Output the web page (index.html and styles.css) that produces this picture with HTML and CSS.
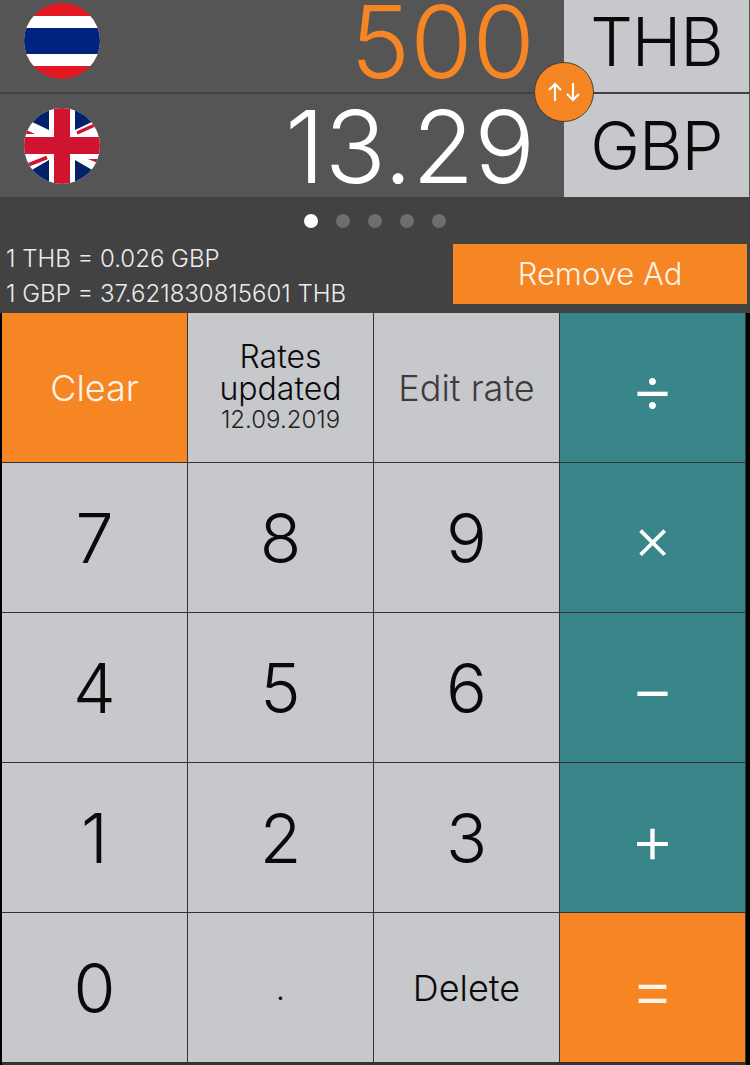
FILE: index.html
```html
<!DOCTYPE html>
<html lang="en">
<head>
  <meta charset="UTF-8">
  <title>Currency Calculator</title>
  <link rel="stylesheet" href="styles.css">
</head>
<body>
  <div class="app">
    <div class="converter">
      <div class="row row-from">
        <svg class="flag" viewBox="0 0 76 76">
          <defs><clipPath id="clipTh"><circle cx="38" cy="38" r="38"/></clipPath></defs>
          <g clip-path="url(#clipTh)">
            <rect width="76" height="76" fill="#e3171f"/>
            <rect y="13" width="76" height="50" fill="#fff"/>
            <rect y="25" width="76" height="26" fill="#00247d"/>
          </g>
        </svg>
        <div class="amount amount-from">500</div>
        <div class="code">THB</div>
      </div>
      <div class="row row-to">
        <svg class="flag" viewBox="0 0 76 76">
          <defs><clipPath id="clipGb"><circle cx="38" cy="38" r="38"/></clipPath></defs>
          <g clip-path="url(#clipGb)">
            <rect width="76" height="76" fill="#fff"/>
            <path d="M25 -2V22L6 13L0 0Z" fill="#012169"/>
            <path d="M51 -2V22L70 13L76 0Z" fill="#012169"/>
            <path d="M25 78V52L6 63L0 76Z" fill="#012169"/>
            <path d="M51 78V52L70 63L76 76Z" fill="#012169"/>
            <path d="M53 25L72 16.5M4 57L23 49.5" stroke="#d0142f" stroke-width="3.5"/>
            <path d="M0 21L11 26H0ZM64 51H76V56Z" fill="#d0142f"/>
            <rect x="30" width="16" height="76" fill="#d0142f"/>
            <rect y="29" width="76" height="17" fill="#d0142f"/>
          </g>
        </svg>
        <div class="amount">13.29</div>
        <div class="code">GBP</div>
      </div>
      <div class="swap">
        <svg viewBox="0 0 36 22" width="36" height="22" fill="none" stroke="#fff" stroke-width="2.2">
          <path d="M9 20V3M3 9l6-6 6 6"/>
          <path d="M27 2v17M21 13l6 6 6-6"/>
        </svg>
      </div>
    </div>

    <div class="info">
      <div class="dots">
        <span class="dot active"></span>
        <span class="dot"></span>
        <span class="dot"></span>
        <span class="dot"></span>
        <span class="dot"></span>
      </div>
      <div class="info-row">
        <div class="rates">
          <div>1 THB = 0.026 GBP</div>
          <div>1 GBP = 37.621830815601 THB</div>
        </div>
        <div class="remove-ad">Remove Ad</div>
      </div>
    </div>

    <div class="keypad">
      <div class="key orange small">Clear</div>
      <div class="key updated">
        <span>Rates</span>
        <span>updated</span>
        <span class="date">12.09.2019</span>
      </div>
      <div class="key small muted">Edit rate</div>
      <div class="key op">÷</div>
      <div class="key">7</div>
      <div class="key">8</div>
      <div class="key">9</div>
      <div class="key op times">×</div>
      <div class="key">4</div>
      <div class="key">5</div>
      <div class="key">6</div>
      <div class="key op">−</div>
      <div class="key">1</div>
      <div class="key">2</div>
      <div class="key">3</div>
      <div class="key op">+</div>
      <div class="key">0</div>
      <div class="key point">.</div>
      <div class="key small">Delete</div>
      <div class="key op orange">=</div>
    </div>
  </div>
</body>
</html>
```

FILE: styles.css
```css
html, body {
  margin: 0;
  height: 100%;
}

body {
  background-color: #424242;
  font-family: 'Inter', 'Liberation Sans', sans-serif;
  font-weight: 300;
  overflow: hidden;
}

.app {
  width: 750px;
  height: 1065px;
  display: flex;
  flex-direction: column;
}

.converter {
  position: relative;
  display: flex;
  flex-direction: column;
  gap: 2px;
  height: 197px;
  background-color: #424242;
}

.row {
  display: flex;
  align-items: center;
  background-color: #555555;
  padding-left: 24px;
}

.row-from {
  height: 92px;
}

.row-to {
  height: 103px;
}

.row-from .flag,
.row-from .amount {
  margin-bottom: 10px;
}

.row-from .code {
  padding-bottom: 10px;
  box-sizing: border-box;
}

.flag {
  width: 76px;
  height: 76px;
  flex-shrink: 0;
}

.amount {
  flex: 1;
  text-align: right;
  padding-right: 29px;
  font-size: 101px;
  line-height: 82px;
  font-weight: 280;
  color: #ffffff;
  white-space: nowrap;
}

.amount-from {
  color: #f68523;
}

.code {
  width: 185px;
  height: 100%;
  flex-shrink: 0;
  margin-right: 1px;
  display: flex;
  align-items: center;
  justify-content: center;
  background-color: #c7c8cc;
  color: #0a0a0a;
  font-size: 67px;
  letter-spacing: -1px;
}

.swap {
  position: absolute;
  left: 534px;
  top: 62px;
  width: 58px;
  height: 58px;
  border: 1.5px solid #4a4034;
  border-radius: 50%;
  background-color: #f68523;
  display: flex;
  align-items: center;
  justify-content: center;
}

.info {
  height: 116px;
  display: flex;
  flex-direction: column;
  color: #ececec;
}

.dots {
  display: flex;
  justify-content: center;
  gap: 18px;
  padding-top: 17px;
}

.dot {
  width: 14px;
  height: 14px;
  border-radius: 50%;
  background-color: #6e6e6e;
}

.dot.active {
  background-color: #ffffff;
}

.info-row {
  display: flex;
  justify-content: space-between;
  padding: 0 3px 0 6px;
}

.rates {
  margin-top: 13px;
  font-size: 24px;
  line-height: 35px;
  white-space: nowrap;
}

.remove-ad {
  width: 294px;
  height: 60px;
  margin-top: 16px;
  padding-bottom: 2px;
  box-sizing: border-box;
  display: flex;
  align-items: center;
  justify-content: center;
  background-color: #f68523;
  color: #fdf3e6;
  font-size: 31px;
}

.keypad {
  display: grid;
  grid-template-columns: 185px 185px 185px 185px;
  grid-template-rows: 149px 149px 149px 149px 149px;
  gap: 1px;
  height: 749px;
  padding-bottom: 3px;
  background-color: #333333;
  border-left: 2px solid #000000;
  border-right: 4px solid #000000;
}

.key {
  display: flex;
  align-items: center;
  justify-content: center;
  background-color: #c7c8cc;
  color: #0a0a0a;
  font-size: 68px;
}

.key.small {
  font-size: 36px;
}

.key.point {
  font-size: 33px;
}

.key.muted {
  color: #3c3c3c;
}

.key.op {
  background-color: #38858a;
  color: #ffffff;
  font-size: 68px;
  font-weight: 260;
  padding-top: 1px;
  box-sizing: border-box;
}

.key.op.times {
  font-size: 60px;
}

.key.orange {
  background-color: #f68523;
  color: #fdf3e6;
}

.updated {
  flex-direction: column;
  font-size: 32px;
  line-height: 32px;
}

.updated .date {
  font-size: 24px;
  line-height: 30px;
  color: #222222;
}
```
